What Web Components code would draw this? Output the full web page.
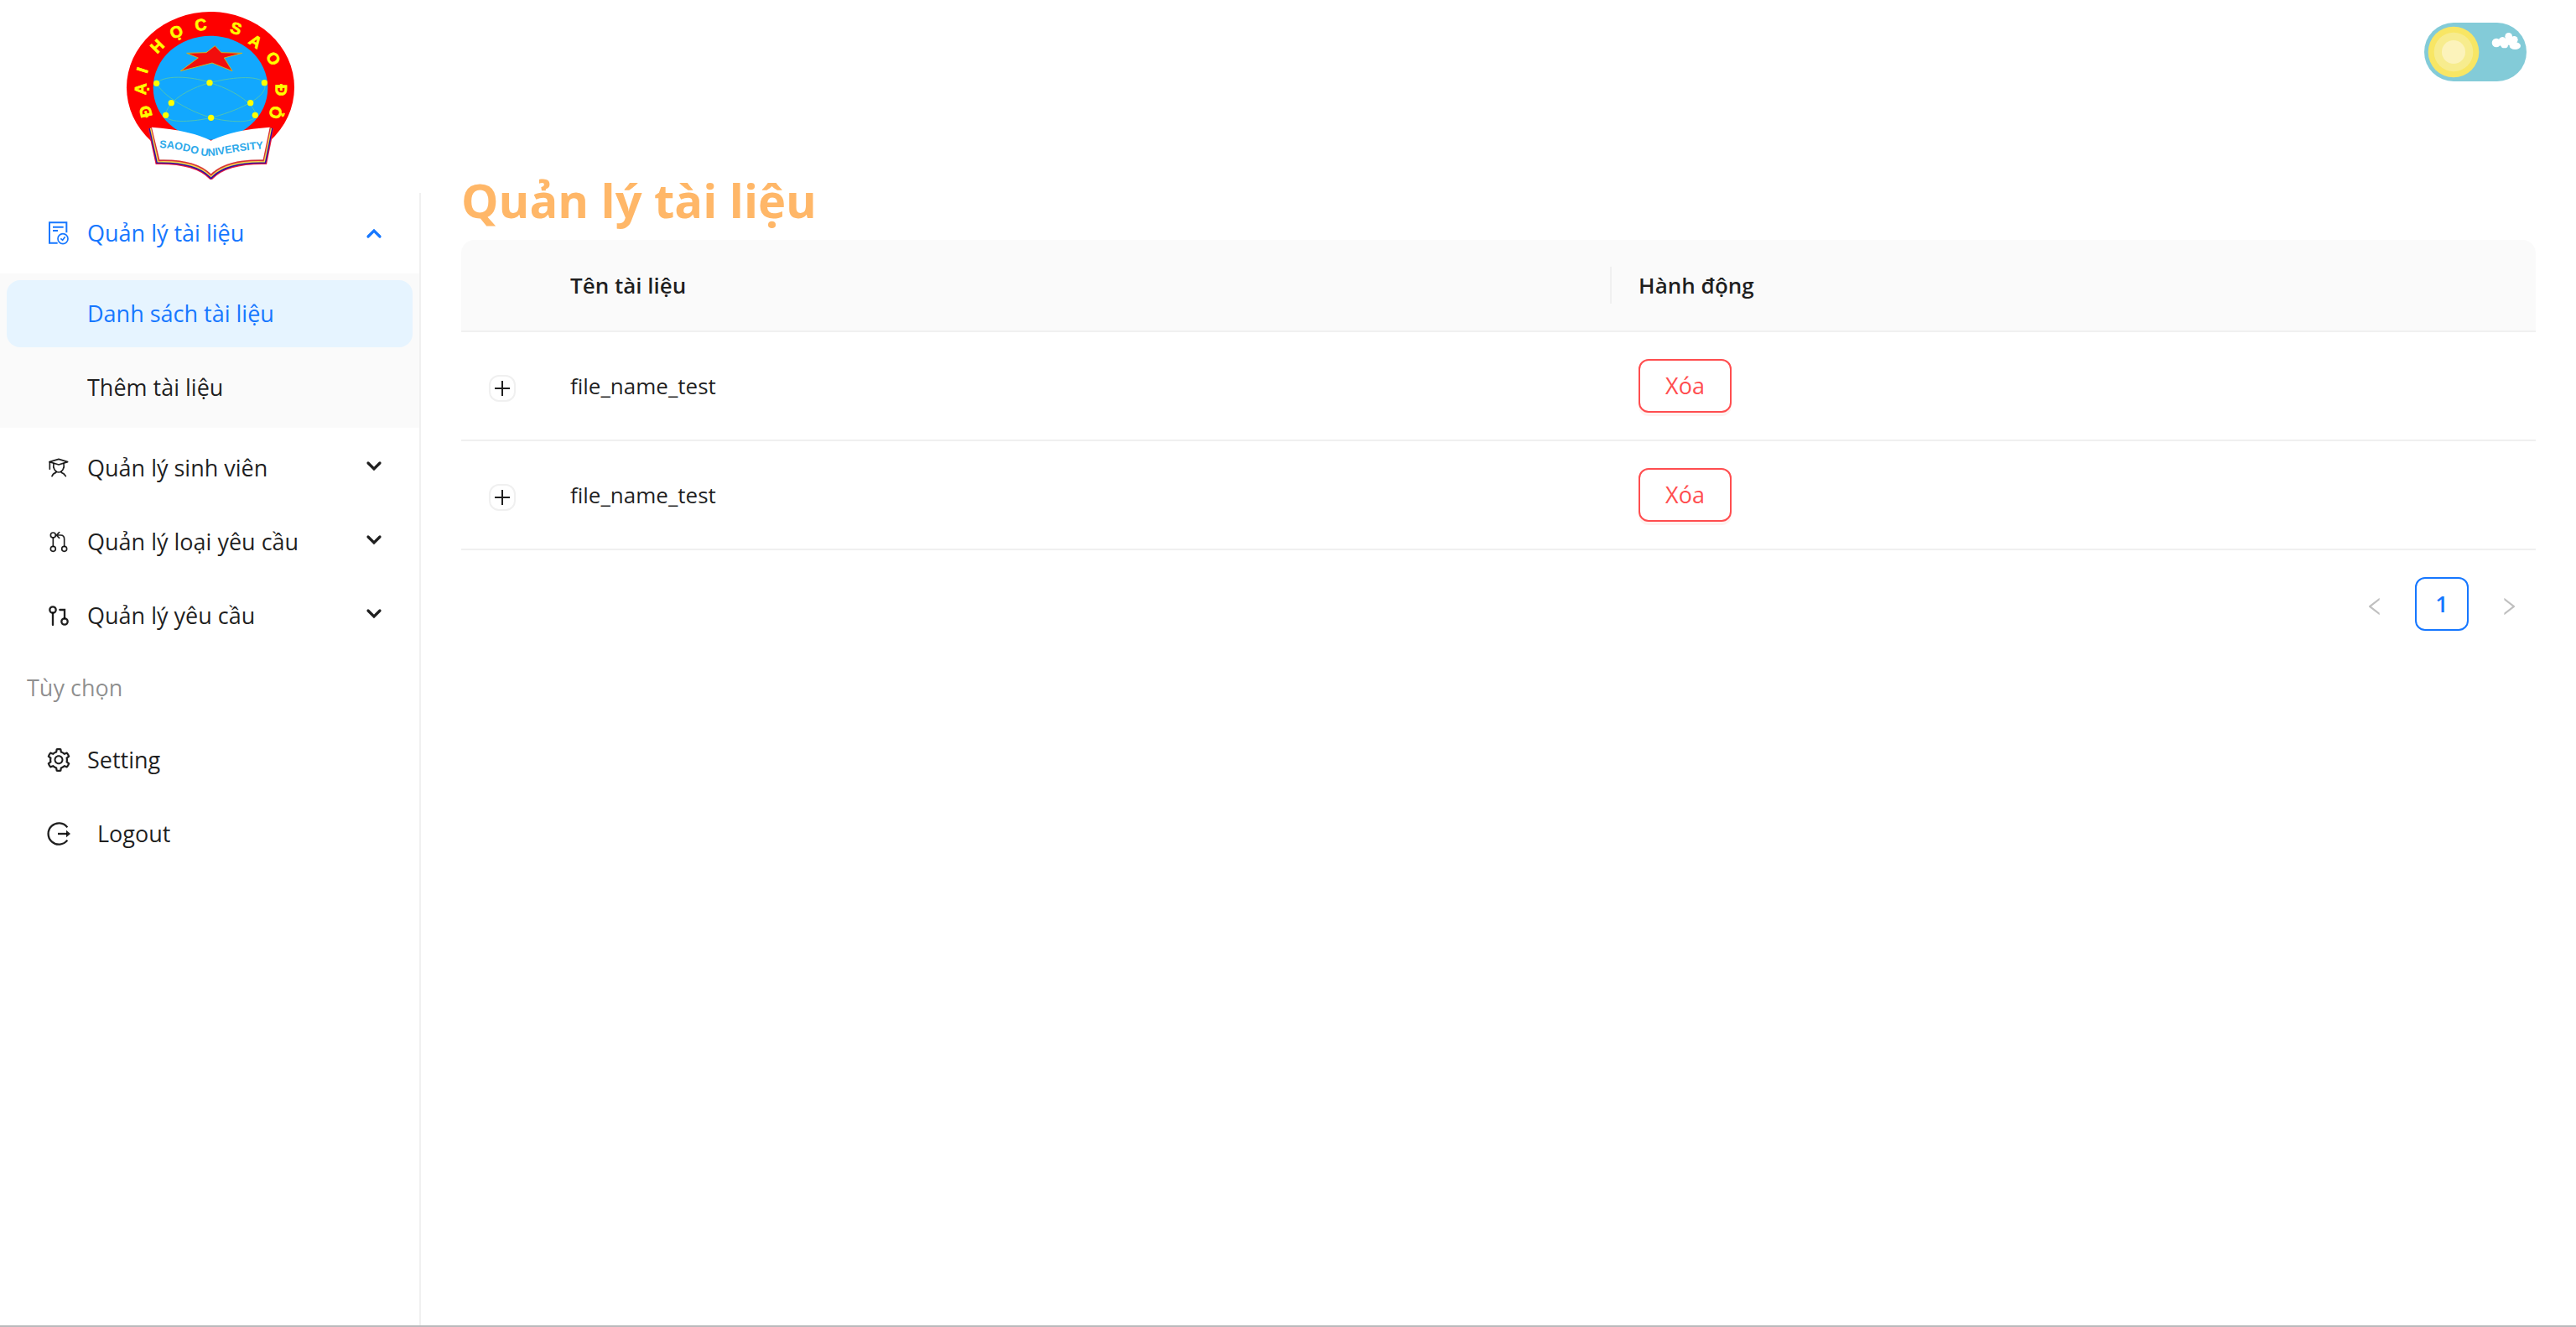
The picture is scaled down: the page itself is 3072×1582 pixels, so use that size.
<!DOCTYPE html>
<html lang="vi">
<head>
<meta charset="utf-8">
<title>Quản lý tài liệu</title>
<style>
  html, body { margin: 0; min-height: 100%; background: #fff; }
  body {
    font-family: "Open Sans", "Noto Sans", sans-serif;
    font-size: 27px;
    line-height: 44px;
    color: rgba(0, 0, 0, .88);
  }
</style>
</head>
<body>
<app-shell>
  <school-logo slot="logo"></school-logo>
  <side-menu slot="menu">
    <menu-group label="Quản lý tài liệu" icon="audit" open>
      <menu-link selected>Danh sách tài liệu</menu-link>
      <menu-link>Thêm tài liệu</menu-link>
    </menu-group>
    <menu-group label="Quản lý sinh viên" icon="student"></menu-group>
    <menu-group label="Quản lý loại yêu cầu" icon="merge"></menu-group>
    <menu-group label="Quản lý yêu cầu" icon="pull"></menu-group>
    <menu-title>Tùy chọn</menu-title>
    <menu-link icon="setting">Setting</menu-link>
    <menu-link icon="logout" spaced>Logout</menu-link>
  </side-menu>
  <theme-toggle slot="tools"></theme-toggle>
  <page-title>Quản lý tài liệu</page-title>
  <document-table></document-table>
  <page-nav></page-nav>
</app-shell>

<script>
const ICONS = {
  audit: ['0 0 84 84', `<g fill="none" stroke="currentColor" stroke-width="6">
    <path d="M70 40V4H9V77H38"/><path d="M21 20H59M21 33H39"/>
    <circle cx="57" cy="62" r="18" stroke-width="5"/><path d="M49 61L56 67L65 55" stroke-width="5"/></g>`],
  student: ['0 0 84 84', `<g fill="none" stroke="currentColor" stroke-width="5" stroke-linejoin="round" stroke-linecap="round">
    <path d="M9 20L42 10L74 20L42 30Z"/><path d="M10 21V46"/>
    <path d="M24 26C20 42 30 57 42 57S64 42 60 26"/><path d="M34 55L32 58C25 60 20 65 18 71M50 55L52 58C59 60 64 65 67 71"/></g>`],
  merge: ['0 0 84 84', `<g fill="none" stroke="currentColor" stroke-width="5">
    <circle cx="22" cy="18" r="9"/><circle cx="22" cy="67" r="9"/><circle cx="62" cy="67" r="9"/>
    <path d="M22 27V58M62 58V32Q62 18 49 18H34M44 8L34 18L44 28" stroke-linecap="round"/></g>`],
  pull: ['0 0 84 84', `<g fill="none" stroke="currentColor" stroke-width="7" stroke-linecap="round">
    <circle cx="21" cy="21" r="11"/><circle cx="63" cy="63" r="11"/>
    <path d="M21 32V75M46 21H63V52"/></g>`],
  logout: ['0 0 84 84', `<g fill="none" stroke="currentColor" stroke-width="7">
    <path d="M73 19A38 38 0 1 0 73 65"/><path d="M39 42H72"/></g><path fill="currentColor" d="M69 29L84 42L69 55Z"/>`],
  setting: ['64 64 896 896', `<path fill="currentColor" d="M924.8 625.7l-65.5-56c3.1-19 4.7-38.4 4.7-57.8s-1.6-38.800-4.700-57.800l65.500-56a32.030 32.030 0 009.300-35.200l-.9-2.600a443.740 443.740 0 00-79.700-137.900l-1.800-2.100a32.120 32.120 0 00-35.100-9.500l-81.300 28.900c-30-24.600-63.500-44-99.700-57.600l-15.700-85a32.050 32.050 0 00-25.800-25.700l-2.700-.5c-52.100-9.400-106.900-9.400-159 0l-2.700.5a32.050 32.050 0 00-25.800 25.700l-15.800 85.400a351.860 351.860 0 00-99 57.400l-81.900-29.100a32 32 0 00-35.100 9.500l-1.800 2.100a446.020 446.020 0 00-79.700 137.900l-.9 2.600c-4.500 12.500-.8 26.500 9.300 35.200l66.300 56.600c-3.100 18.800-4.600 38-4.600 57.100 0 19.200 1.500 38.400 4.600 57.100L99 625.500a32.030 32.030 0 00-9.300 35.200l.9 2.600c18.100 50.400 44.900 96.900 79.700 137.900l1.800 2.100a32.120 32.120 0 0035.100 9.500l81.900-29.100c29.800 24.500 63.100 43.900 99 57.400l15.800 85.400a32.050 32.050 0 0025.800 25.700l2.700.5a449.400 449.400 0 00159 0l2.700-.5a32.050 32.050 0 0025.800-25.700l15.700-85a350 350 0 0099.700-57.600l81.300 28.900a32 32 0 0035.100-9.500l1.800-2.100c34.800-41.100 61.600-87.500 79.700-137.900l.9-2.600c4.500-12.300.8-26.300-9.300-35zM788.300 465.900c2.500 15.100 3.800 30.600 3.800 46.100s-1.300 31-3.800 46.100l-6.600 40.100 74.700 63.900a370.030 370.030 0 01-42.600 73.600L721 702.800l-31.400 25.800c-23.900 19.600-50.500 35-79.300 45.800l-38.100 14.300-17.900 97a377.500 377.500 0 01-85 0l-17.900-97.200-37.800-14.500c-28.500-10.800-55-26.200-78.700-45.700l-31.400-25.900-93.400 33.200c-17-22.900-31.200-47.600-42.600-73.600l75.500-64.500-6.500-40c-2.400-14.900-3.700-30.300-3.700-45.500 0-15.300 1.200-30.600 3.700-45.500l6.500-40-75.500-64.500c11.300-26.100 25.600-50.700 42.600-73.600l93.400 33.200 31.400-25.900c23.700-19.500 50.200-34.900 78.700-45.700l37.900-14.300 17.900-97.200c28.100-3.200 56.800-3.200 85 0l17.900 97 38.100 14.300c28.700 10.800 55.400 26.200 79.300 45.800l31.400 25.800 92.800-32.900c17 22.900 31.200 47.600 42.600 73.600L781.800 426l6.500 39.900zM512 326c-97.200 0-176 78.800-176 176s78.800 176 176 176 176-78.800 176-176-78.800-176-176-176zm79.200 255.200A111.600 111.600 0 01512 614c-29.900 0-58-11.700-79.200-32.800A111.600 111.600 0 01400 502c0-29.900 11.700-58 32.800-79.200C454 401.600 482.100 390 512 390c29.900 0 58 11.600 79.200 32.800A111.600 111.600 0 01624 502c0 29.900-11.700 58-32.800 79.200z"/>`],
  left: ['64 64 896 896', `<path fill="currentColor" d="M724 218.300V141c0-6.700-7.700-10.400-12.900-6.300L260.300 486.800a31.860 31.860 0 000 50.300l450.800 352.100c5.300 4.100 12.900.4 12.900-6.300v-77.300c0-4.900-2.300-9.600-6.100-12.600l-360-281 360-281.100c3.800-3 6.100-7.700 6.100-12.600z"/>`],
  right: ['64 64 896 896', `<path fill="currentColor" d="M765.700 486.800L314.900 134.700A7.970 7.970 0 00302 141v77.300c0 4.900 2.300 9.600 6.100 12.600l360 281.100-360 281.100c-3.900 3-6.100 7.700-6.100 12.600V883c0 6.700 7.700 10.400 12.900 6.300l450.800-352.100a31.960 31.960 0 000-50.400z"/>`],
  plus: ['0 0 18 18', `<path d="M9 0V18M0 9H18" stroke="currentColor" stroke-width="2"/>`],
  up: ['0 0 20 20', `<path d="M3 14L10 7L17 14" fill="none" stroke="currentColor" stroke-width="3.200" stroke-linecap="round"/>`],
  down: ['0 0 20 20', `<path d="M3 4L10 11L17 4" fill="none" stroke="currentColor" stroke-width="3.200" stroke-linecap="round"/>`]
};

class Base extends HTMLElement {
  constructor() { super(); this.attachShadow({ mode: 'open' }); }
  connectedCallback() { this.shadowRoot.innerHTML = this.view(); }
}

class UiIcon extends Base {
  view() {
    const [box, art] = ICONS[this.getAttribute('name')];
    return `<style>
      :host { display: block; flex: none; width: 28px; height: 28px; }
      svg { display: block; width: 100%; height: 100%; }
    </style><svg viewBox="${box}" aria-hidden="true">${art}</svg>`;
  }
}

class AppShell extends Base {
  view() {
    return `<style>
      :host { display: grid; grid-template-columns: 502px minmax(0, 1fr); min-height: 100vh;
              box-sizing: border-box; border-bottom: 2px solid #b9babc; }
      aside { display: flex; flex-direction: column; }
      .brand { display: flex; justify-content: center; padding: 12px 0 16px; }
      .menu { flex: 1; display: flex; flex-direction: column; }
      main { padding: 0 48px; }
      header { display: flex; justify-content: flex-end; padding: 27px 11px; }
    </style>
    <aside><div class="brand"><slot name="logo"></slot></div><div class="menu"><slot name="menu"></slot></div></aside>
    <main><header><slot name="tools"></slot></header><slot></slot></main>`;
  }
}

class SchoolLogo extends Base {
  view() {
    /* Ring lettering: glyph, centre x, centre y, angle, advance in em. */
    const ring = [
      ['Đ', 130, 400, -104, .72], ['Ạ', 112, 318, -88, .72], ['I', 119, 251, -72, .28], [' ', 140, 210, -60, .28],
      ['H', 172, 165, -45, .72], ['Ọ', 241, 114, -25, .78], ['C', 328, 88, -7, .72], [' ', 390, 88, 0, .28],
      ['S', 455, 102, 18, .67], ['A', 525, 148, 34, .72], ['O', 588, 209, 58, .78], [' ', 605, 260, 70, .28],
      ['Đ', 616, 322, 91, .72], ['Ỏ', 596, 402, 106, .78]
    ];
    const size = 58, cap = size * .7;
    const xs = [], ys = [], rs = [];
    for (const [, cx, cy, deg, adv] of ring) {
      const a = deg * Math.PI / 180, dx = -adv * size / 2, dy = cap / 2;
      xs.push(Math.round(cx + dx * Math.cos(a) - dy * Math.sin(a)));
      ys.push(Math.round(cy + dx * Math.sin(a) + dy * Math.cos(a)));
      rs.push(deg);
    }
    return `<style>
      :host { display: block; width: 202px; height: 202px; }
      svg { display: block; width: 100%; height: 100%; }
      text { font-family: "Liberation Sans", sans-serif; font-weight: 700; }
    </style>
    <svg viewBox="60 36 606 606" role="img" aria-label="Đại học Sao Đỏ">
      <ellipse cx="363" cy="313" rx="300" ry="271" fill="#fe0000"/>
      <ellipse cx="363" cy="314" rx="205" ry="186" fill="#12a8fe"/>
      <g fill="none" stroke="#4fc4b4" stroke-width="3">
        <path d="M170 298C200 262 320 278 360 296C440 318 520 370 526 412C522 442 430 438 365 421C300 402 200 352 170 298Z"/>
        <path d="M556 296C530 266 430 278 360 296C280 318 205 366 203 412C206 444 310 434 365 421C440 402 578 350 556 296Z"/>
      </g>
      <g fill="#ffff00"><circle cx="170" cy="298" r="11"/><circle cx="360" cy="296" r="11"/><circle cx="556" cy="296" r="11"/>
        <circle cx="223" cy="368" r="11"/><circle cx="506" cy="368" r="11"/><circle cx="203" cy="412" r="11"/>
        <circle cx="523" cy="412" r="11"/><circle cx="365" cy="421" r="11"/></g>
      <path d="M379 164L402 188L477 190L412 207L441 254L369 225L256 254L319 207L278 190L348 188Z" fill="#f20d0d" stroke="#c9b429" stroke-width="3"/>
      <text font-size="${size}" fill="#ffff00" stroke="#ffff00" stroke-width="2" x="${xs.join(' ')}" y="${ys.join(' ')}" rotate="${rs.join(' ')}">${ring.map(g => g[0]).join('')}</text>
      <g fill="none">
        <path d="M149 458L175 578Q310 576 365 632Q420 576 556 578L580 458" stroke="#e3173e" stroke-width="20"/>
        <path d="M149 458L175 578Q310 576 365 632Q420 576 556 578L580 458" stroke="#2a12a8" stroke-width="13"/>
        <path d="M151 458L177 576Q310 573 365 628Q420 573 554 576L578 458" stroke="#f5d94a" stroke-width="9"/>
        <path d="M153 458L179 574Q310 570 365 626Q420 570 552 574L576 458" stroke="#d8303a" stroke-width="5"/>
      </g>
      <path d="M153 455Q290 465 365 503Q440 465 575 455L551 571Q420 568 365 622Q310 568 181 571Z" fill="#fff"/>
      <path id="wave" d="M180 528C240 530 290 544 330 556C380 566 410 542 570 530" fill="none"/>
      <text font-size="38" fill="#2ea9ea"><textPath href="#wave">SAODO UNIVERSITY</textPath></text>
    </svg>`;
  }
}

class ThemeToggle extends Base {
  view() {
    return `<style>
      :host { display: block; }
      label { display: grid; width: 122px; height: 70px; cursor: pointer; }
      input, svg { grid-area: 1 / 1; margin: 0; width: 100%; height: 100%; }
      input { appearance: none; border-radius: 35px; background: #83cbd8; }
      svg { pointer-events: none; }
    </style>
    <label><input type="checkbox" role="switch" aria-label="Dark mode">
      <svg viewBox="0 0 366 210" aria-hidden="true">
        <circle cx="105" cy="105" r="91" fill="#f8e664"/><circle cx="105" cy="105" r="70" fill="#f7ec8e"/><circle cx="105" cy="105" r="42" fill="#fcf3bb"/>
        <g fill="#fff"><ellipse cx="258" cy="72" rx="16" ry="16"/><ellipse cx="280" cy="68" rx="15" ry="17"/><ellipse cx="287" cy="80" rx="13" ry="11"/>
          <ellipse cx="302" cy="49" rx="13" ry="13"/><ellipse cx="306" cy="66" rx="20" ry="15"/><ellipse cx="322" cy="61" rx="13" ry="13"/><ellipse cx="325" cy="83" rx="20" ry="13"/></g>
      </svg></label>`;
  }
}

const ITEM_CSS = `
  .item { display: flex; align-items: center; gap: 20px; box-sizing: border-box; height: 80px; margin: 8px;
          padding: 0 36px 0 48px; border: 0; border-radius: 16px; background: none; color: inherit;
          font: inherit; text-align: left; text-decoration: none; cursor: pointer; }
  .text { flex: 1; white-space: nowrap; }`;

class SideMenu extends Base {
  view() {
    return `<style>
      :host { display: block; flex: 1; border-right: 2px solid #f0f0f0; }
      nav { display: flow-root; }
    </style><nav><slot></slot></nav>`;
  }
}

class MenuGroup extends Base {
  view() {
    const open = this.hasAttribute('open');
    return `<style>${ITEM_CSS}
      :host { display: flow-root; margin-bottom: -8px; }
      :host([open]) { margin-bottom: 0; }
      button.item { width: calc(100% - 16px); }
      :host([open]) button.item { color: #1677ff; }
      .arrow { width: 20px; height: 20px; }
      .sub { display: flow-root; background: #fafafa; }
      .sub ::slotted(menu-link) { --indent: 96px; }
    </style>
    <button class="item" type="button" aria-expanded="${open}"><ui-icon name="${this.getAttribute('icon')}"></ui-icon>
      <span class="text">${this.getAttribute('label')}</span><ui-icon class="arrow" name="${open ? 'up' : 'down'}"></ui-icon></button>
    ${open ? '<div class="sub"><slot></slot></div>' : ''}`;
  }
}

class MenuLink extends Base {
  view() {
    const icon = this.getAttribute('icon');
    return `<style>${ITEM_CSS}
      :host { display: block; }
      .item { margin: 8px; padding-left: var(--indent, 48px); }
      :host([selected]) .item { background: #e6f4ff; color: #1677ff; }
      :host([spaced]) .item { gap: 32px; }
    </style>
    <a class="item" href="#">${icon ? `<ui-icon name="${icon}"></ui-icon>` : ''}<span class="text"><slot></slot></span></a>`;
  }
}

class MenuTitle extends Base {
  view() {
    return `<style>:host { display: block; margin-top: 8px; padding: 16px 32px; color: rgba(0, 0, 0, .45); }</style><slot></slot>`;
  }
}

class PageTitle extends Base {
  view() {
    return `<style>
      :host { display: block; padding: 70px 0 4px; }
      h1 { margin: 0; font-size: 56px; line-height: 88px; font-weight: 700; color: #ffb768; }
    </style><h1><slot></slot></h1>`;
  }
}

class DocumentTable extends Base {
  view() {
    const row = name => `<tr><td class="toggle"><button class="expand" type="button" aria-label="Expand row"><ui-icon name="plus"></ui-icon></button></td>
      <td>${name}</td><td><button class="danger" type="button">Xóa</button></td></tr>`;
    return `<style>
      :host { display: block; }
      table { width: 100%; table-layout: fixed; border-collapse: separate; border-spacing: 0; font-size: 26px; }
      .c1 { width: 98px; } .c2 { width: 51.5%; }
      th, td { padding: 32px; border-bottom: 2px solid #f0f0f0; text-align: left; }
      th { background: #fafafa; font-weight: 600; }
      th:first-child { border-top-left-radius: 16px; }
      th:last-child { border-top-right-radius: 16px; }
      .split { background: linear-gradient(#f0f0f0, #f0f0f0) right center / 2px 44px no-repeat #fafafa; }
      td.toggle { padding: 6px 33px 0; }
      button { font: inherit; cursor: pointer; background: #fff; box-sizing: border-box; }
      .expand { display: flex; align-items: center; justify-content: center; width: 32px; height: 32px; padding: 0;
                border: 2px solid #f0f0f0; border-radius: 12px; color: inherit; }
      .expand ui-icon { width: 18px; height: 18px; }
      .danger { display: block; height: 64px; padding: 0 30px; border: 2px solid #ff4d4f; border-radius: 12px; color: #ff4d4f;
                font-size: 27px; box-shadow: 0 4px 0 rgba(255, 38, 5, .06); }
    </style>
    <table><colgroup><col class="c1"><col class="c2"><col></colgroup>
      <thead><tr><th></th><th class="split">Tên tài liệu</th><th>Hành động</th></tr></thead>
      <tbody>${row('file_name_test')}${row('file_name_test')}</tbody></table>`;
  }
}

class PageNav extends Base {
  view() {
    return `<style>
      :host { display: block; }
      nav { display: flex; justify-content: flex-end; gap: 16px; padding: 32px 0; }
      button { display: flex; align-items: center; justify-content: center; box-sizing: border-box; width: 64px; height: 64px; padding: 0;
               border: 0; background: none; border-radius: 12px; font: inherit; font-weight: 600; cursor: pointer; }
      ui-icon { width: 24px; height: 24px; }
      .current { border: 2px solid #1677ff; background: #fff; color: #1677ff; }
      button:disabled { padding-top: 5px; color: rgba(0, 0, 0, .25); }
    </style>
    <nav aria-label="Pagination"><button type="button" disabled aria-label="Previous page"><ui-icon name="left"></ui-icon></button>
      <button class="current" type="button" aria-current="page">1</button>
      <button type="button" disabled aria-label="Next page"><ui-icon name="right"></ui-icon></button></nav>`;
  }
}

customElements.define('ui-icon', UiIcon);
customElements.define('school-logo', SchoolLogo);
customElements.define('theme-toggle', ThemeToggle);
customElements.define('menu-link', MenuLink);
customElements.define('menu-title', MenuTitle);
customElements.define('menu-group', MenuGroup);
customElements.define('side-menu', SideMenu);
customElements.define('page-title', PageTitle);
customElements.define('document-table', DocumentTable);
customElements.define('page-nav', PageNav);
customElements.define('app-shell', AppShell);
</script>
</body>
</html>
